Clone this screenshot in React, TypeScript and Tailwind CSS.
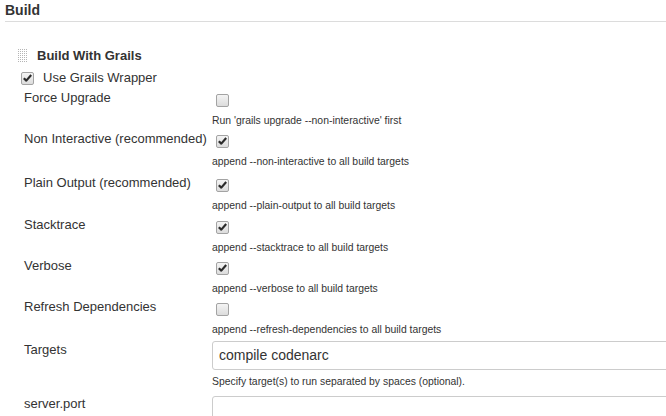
import React from "react";

type Row = {
  label: string;
  checked: boolean;
  desc: string;
  h: string;
};

const rows: Row[] = [
  { label: "Force Upgrade", checked: false, desc: "Run 'grails upgrade --non-interactive' first", h: "h-[41px]" },
  { label: "Non Interactive (recommended)", checked: true, desc: "append --non-interactive to all build targets", h: "h-[44px]" },
  { label: "Plain Output (recommended)", checked: true, desc: "append --plain-output to all build targets", h: "h-[42px]" },
  { label: "Stacktrace", checked: true, desc: "append --stacktrace to all build targets", h: "h-[41px]" },
  { label: "Verbose", checked: true, desc: "append --verbose to all build targets", h: "h-[41px]" },
  { label: "Refresh Dependencies", checked: false, desc: "append --refresh-dependencies to all build targets", h: "h-[41px]" },
];

function Checkbox({ checked }: { checked: boolean }) {
  return (
    <span className="flex h-[13px] w-[13px] items-center justify-center rounded-[2px] border border-[#a3a3a3] bg-gradient-to-b from-[#f4f4f4] to-[#dcdcdc]">
      {checked && (
        <svg width="9" height="8" viewBox="0 0 9 8">
          <path d="M0.8 4.2 L3.3 6.6 L8.2 1" fill="none" stroke="#2b2b2b" strokeWidth="2.2" strokeLinejoin="round" />
        </svg>
      )}
    </span>
  );
}

// drag handle: grey dotted block
function Grip() {
  const dots = [];
  for (let r = 0; r < 7; r++) {
    for (let c = 0; c < 5; c++) {
      dots.push(<rect key={`${r}-${c}`} x={c * 2} y={r * 2} width="1" height="1" fill="#b5b5b5" />);
    }
  }
  return (
    <svg width="10" height="14" viewBox="0 0 10 14">
      {dots}
    </svg>
  );
}

export default function App() {
  return (
    <main className="h-[416px] w-[666px] overflow-hidden bg-white font-['Liberation_Sans',Arial,sans-serif] text-[#333]">
      {/* section header */}
      <div className="ml-[5px] border-b border-[#dcdcdc] pt-[2px] pb-[3px]">
        <h1 className="text-[14px] font-bold leading-[16px]">Build</h1>
      </div>

      <div className="pt-[27px]">
        {/* builder title */}
        <div className="flex h-[14px] items-center pl-[18px]">
          <Grip />
          <span className="ml-[9px] text-[13px] font-bold leading-[16px]">Build With Grails</span>
        </div>

        <div className="mt-[6px] flex h-[18px] items-center pl-[21px]">
          <Checkbox checked />
          <span className="ml-[9px] text-[13px] leading-[16px]">Use Grails Wrapper</span>
        </div>

        <div className="mt-[1px] pl-[24px]">
          {rows.map((row) => (
            <div key={row.label} className={`${row.h} grid grid-cols-[188px_1fr]`}>
              <div className="pt-[1px] text-[13px] leading-[17px]">{row.label}</div>
              <div className="flex flex-col">
                <div className="flex h-[24px] items-center pl-[4px]">
                  <Checkbox checked={row.checked} />
                </div>
                <div className="text-[10.4px] leading-[17px]">{row.desc}</div>
              </div>
            </div>
          ))}

          {/* targets */}
          <div className="grid grid-cols-[188px_1fr]">
            <div className="pt-[3px] text-[13px] leading-[17px]">Targets</div>
            <div className="flex flex-col">
              <div className="mt-[3px] flex h-[29px] w-[470px] items-center rounded-[3px] border border-[#cccccc] px-[6px] text-[14px]">
                compile codenarc
              </div>
              <div className="mt-[3px] text-[10.4px] leading-[17px]">Specify target(s) to run separated by spaces (optional).</div>
            </div>
          </div>

          <div className="grid grid-cols-[188px_1fr]">
            <div className="pt-[5px] text-[13px] leading-[17px]">server.port</div>
            <div className="mt-[6px] h-[29px] w-[470px] rounded-[3px] border border-[#cccccc]" />
          </div>
        </div>
      </div>
    </main>
  );
}
